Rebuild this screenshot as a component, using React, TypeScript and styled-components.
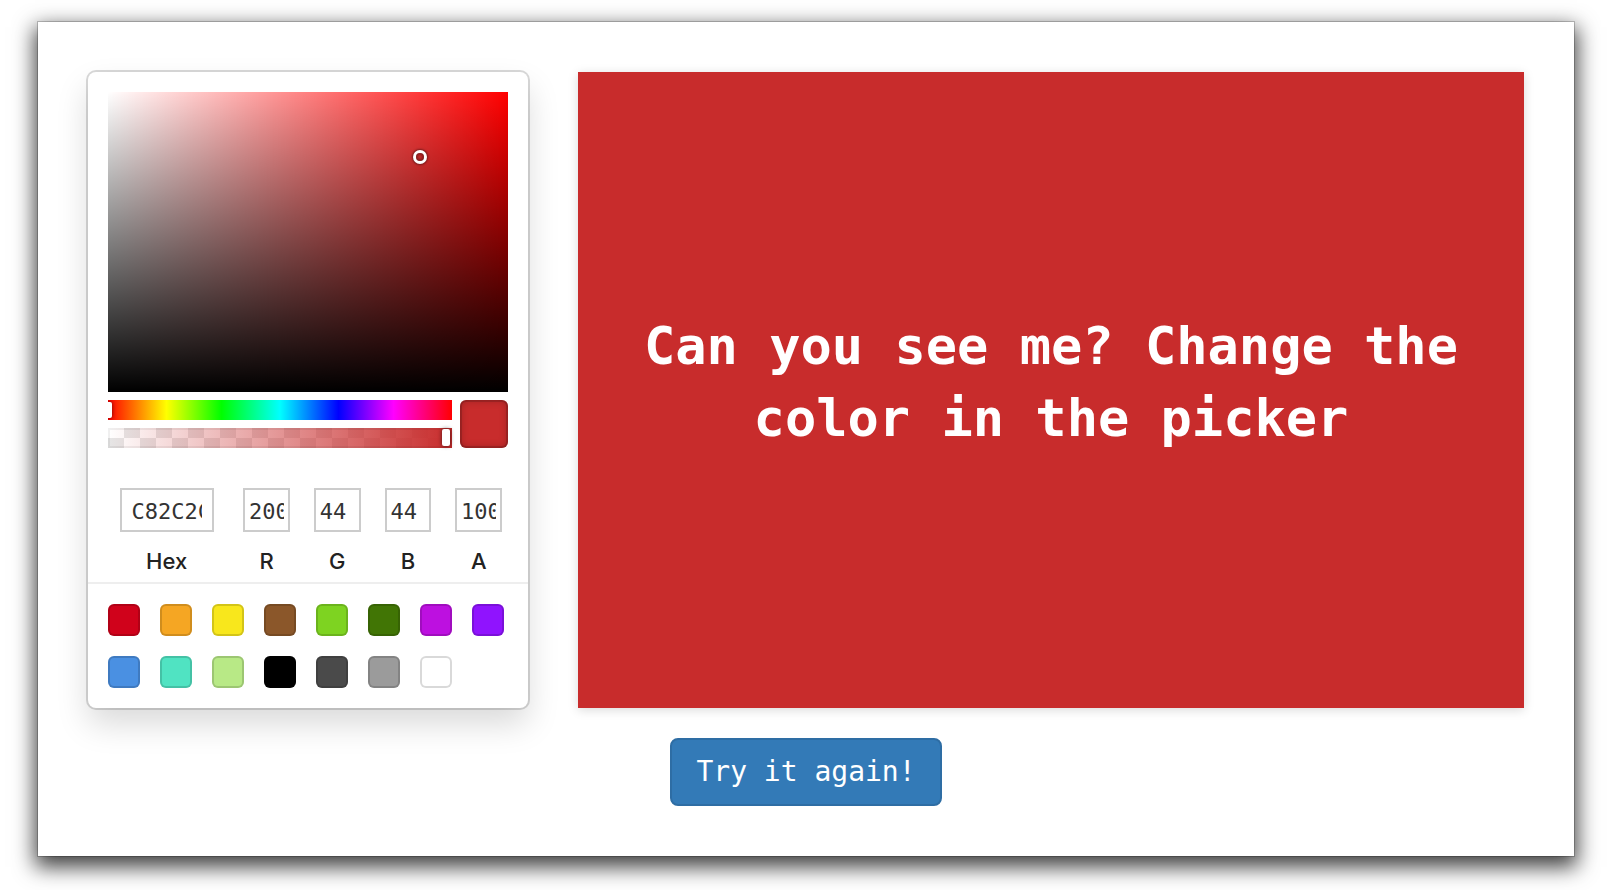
import React from "react";
import styled, { createGlobalStyle } from "styled-components";

const Global = createGlobalStyle`
  *, *::before, *::after { box-sizing: border-box; }
  html, body { margin: 0; padding: 0; background: #ffffff; }
  body { font-family: Inter, "Noto Sans", sans-serif; }
`;

const Page = styled.div`
  padding: 22px 0 34px 38px;
  min-height: 890px;
  overflow: hidden;
`;

const Window = styled.div`
  width: 1536px;
  height: 834px;
  background: #ffffff;
  box-shadow: 0 0 0 1px rgba(0, 0, 0, 0.2), 0 8px 20px 3px rgba(0, 0, 0, 0.75);
  padding: 50px 50px 0 50px;
  display: flex;
  flex-direction: column;
`;

const Row = styled.div`
  display: flex;
  gap: 50px;
`;

const Picker = styled.div`
  width: 440px;
  padding: 20px 20px 0;
  background: #fff;
  border-radius: 8px;
  box-shadow: 0 0 0 2px rgba(0, 0, 0, 0.15), 0 16px 32px rgba(0, 0, 0, 0.15);
`;

const Saturation = styled.div`
  position: relative;
  height: 300px;
  background:
    linear-gradient(to top, #000, rgba(0, 0, 0, 0)),
    linear-gradient(to right, #fff, rgba(255, 255, 255, 0)),
    #ff0000;
`;

const SatCursor = styled.div`
  position: absolute;
  width: 8px;
  height: 8px;
  border-radius: 50%;
  transform: translate(-4px, -4px);
  box-shadow: 0 0 0 3px #fff, inset 0 0 2px 2px rgba(0, 0, 0, 0.3), 0 0 2px 4px rgba(0, 0, 0, 0.4);
`;

const Controls = styled.div`
  display: flex;
  margin-top: 8px;
`;

const Sliders = styled.div`
  flex: 1;
  display: flex;
  flex-direction: column;
  gap: 8px;
`;

const HueBar = styled.div`
  position: relative;
  height: 20px;
  overflow: hidden;
  background: linear-gradient(
    to right,
    #f00 0%,
    #ff0 17%,
    #0f0 33%,
    #0ff 50%,
    #00f 67%,
    #f0f 83%,
    #f00 100%
  );
`;

const HuePointer = styled.div`
  position: absolute;
  left: 0;
  top: 2px;
  width: 8px;
  height: 16px;
  border-radius: 2px;
  background: #fff;
  transform: translateX(-4px);
  box-shadow: 0 0 4px rgba(0, 0, 0, 0.6);
`;

const AlphaBar = styled.div`
  position: relative;
  height: 20px;
  background:
    linear-gradient(to right, rgba(200, 44, 44, 0), rgb(200, 44, 44)),
    repeating-conic-gradient(#e6e6e6 0 25%, #ffffff 0 50%) 0 0 / 32px 20px;
  box-shadow: inset 0 0 0 2px rgba(0, 0, 0, 0.06);
`;

const AlphaPointer = styled.div`
  position: absolute;
  left: calc(100% - 10px);
  top: 1px;
  width: 8px;
  height: 17px;
  border-radius: 2px;
  background: #fff;
  box-shadow: 0 0 4px rgba(0, 0, 0, 0.6);
`;

const Preview = styled.div<{ $color: string }>`
  width: 48px;
  height: 48px;
  margin-left: 8px;
  border-radius: 6px;
  background: ${(p) => p.$color};
  box-shadow: inset 0 0 0 2px rgba(0, 0, 0, 0.15), inset 0 0 8px rgba(0, 0, 0, 0.25);
`;

const Fields = styled.div`
  display: flex;
  padding-top: 40px;
`;

const Field = styled.div<{ $wide?: boolean }>`
  flex: ${(p) => (p.$wide ? 2 : 1)};
  padding-left: ${(p) => (p.$wide ? "0" : "12px")};
  min-width: 0;
`;

const Input = styled.input`
  display: block;
  width: 80%;
  height: 44px;
  margin: 0 auto;
  padding: 3px 10% 0;
  border: none;
  outline: none;
  box-shadow: inset 0 0 0 2px #cccccc;
  font-family: "DejaVu Sans Mono", "Liberation Mono", monospace;
  font-size: 22px;
  color: #333;
  background: #fff;
`;

const Label = styled.span`
  display: block;
  text-align: center;
  padding: 16px 0 8px;
  line-height: 26px;
  font-family: Inter, "Noto Sans", sans-serif;
  font-weight: 500;
  font-size: 22px;
  color: #222;
  text-transform: capitalize;
`;

const Presets = styled.div`
  display: flex;
  flex-wrap: wrap;
  margin: 0 -20px;
  padding: 20px 0 0 20px;
  border-top: 2px solid #eeeeee;
`;

const Swatch = styled.div<{ $color: string }>`
  width: 32px;
  height: 32px;
  margin: 0 20px 20px 0;
  border-radius: 6px;
  background: ${(p) => p.$color};
  box-shadow: inset 0 0 0 2px rgba(0, 0, 0, 0.15);
`;

const ColorBox = styled.div<{ $color: string }>`
  flex: 1;
  display: flex;
  align-items: center;
  justify-content: center;
  padding: 0 48px 16px;
  background: ${(p) => p.$color};
  box-shadow: 0 2px 10px rgba(0, 0, 0, 0.15);
`;

const BoxText = styled.p`
  margin: 0;
  text-align: center;
  color: #ffffff;
  font-family: "DejaVu Sans Mono", "Liberation Mono", monospace;
  font-weight: 700;
  font-size: 52px;
  line-height: 72px;
`;

const ButtonRow = styled.div`
  display: flex;
  justify-content: center;
  margin-top: 30px;
`;

const Button = styled.button`
  height: 68px;
  padding: 0 24px;
  border: 2px solid #2e6da4;
  border-radius: 8px;
  background: #337ab7;
  color: #ffffff;
  font-family: "DejaVu Sans Mono", "Liberation Mono", monospace;
  font-size: 28px;
  line-height: 40px;
  cursor: pointer;
`;

const COLOR = "#c82c2c";

const presets = [
  "#D0021B",
  "#F5A623",
  "#F8E71C",
  "#8B572A",
  "#7ED321",
  "#417505",
  "#BD10E0",
  "#9013FE",
  "#4A90E2",
  "#50E3C2",
  "#B8E986",
  "#000000",
  "#4A4A4A",
  "#9B9B9B",
  "#FFFFFF",
];

const fields: { label: string; value: string; wide?: boolean }[] = [
  { label: "hex", value: "C82C2C", wide: true },
  { label: "r", value: "200" },
  { label: "g", value: "44" },
  { label: "b", value: "44" },
  { label: "a", value: "100" },
];

export default function App() {
  const sat = (200 - 44) / 200;
  const val = 200 / 255;
  return (
    <>
      <Global />
      <Page>
        <Window>
          <Row>
            <Picker>
              <Saturation>
                <SatCursor style={{ left: `${sat * 100}%`, top: `${(1 - val) * 100}%` }} />
              </Saturation>
              <Controls>
                <Sliders>
                  <HueBar>
                    <HuePointer />
                  </HueBar>
                  <AlphaBar>
                    <AlphaPointer />
                  </AlphaBar>
                </Sliders>
                <Preview $color={COLOR} />
              </Controls>
              <Fields>
                {fields.map((f) => (
                  <Field key={f.label} $wide={f.wide}>
                    <Input value={f.value} readOnly />
                    <Label>{f.label}</Label>
                  </Field>
                ))}
              </Fields>
              <Presets>
                {presets.map((c) => (
                  <Swatch key={c} $color={c} />
                ))}
              </Presets>
            </Picker>
            <ColorBox $color={COLOR}>
              <BoxText>Can you see me? Change the color in the picker</BoxText>
            </ColorBox>
          </Row>
          <ButtonRow>
            <Button>Try it again!</Button>
          </ButtonRow>
        </Window>
      </Page>
    </>
  );
}
